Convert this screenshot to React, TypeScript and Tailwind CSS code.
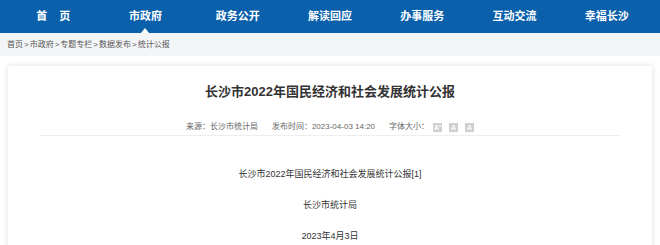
import React from 'react';

// ─── Nav Config ───────────────────────────────────────────────
const NAV_ITEMS = ['首页', '市政府', '政务公开', '解读回应', '办事服务', '互动交流', '幸福长沙'];
const ACTIVE = '市政府';
const CRUMBS = ['首页', '市政府', '专题专栏', '数据发布', '统计公报'];

const FONT = { fontFamily: '"Liberation Sans", "Noto Sans CJK SC", sans-serif' };

// ─── Top Nav ──────────────────────────────────────────────────
const TopNav = () => (
  <nav className="h-[33px] bg-[#0b60ab] px-[7px] grid grid-cols-7">
    {NAV_ITEMS.map((item) => (
      <div key={item} className="relative flex items-center justify-center text-[11px] font-bold text-white">
        {item === '首页' ? (
          <span className="flex gap-[12px]">
            <span>首</span>
            <span>页</span>
          </span>
        ) : (
          <span>{item}</span>
        )}
        {item === ACTIVE && (
          <span className="absolute bottom-0 left-1/2 -translate-x-1/2 w-0 h-0 border-l-[4px] border-r-[4px] border-b-[5px] border-l-transparent border-r-transparent border-b-white" />
        )}
      </div>
    ))}
  </nav>
);

// ─── Breadcrumb ───────────────────────────────────────────────
const Breadcrumb = () => (
  <div className="h-[23px] bg-[#f4f5f7] px-[7px] flex items-center text-[8px] text-[#555]">
    {CRUMBS.map((c, i) => (
      <span key={c}>
        {i > 0 && <span className="px-[1px]">&gt;</span>}
        {c}
      </span>
    ))}
  </div>
);

// ─── Font Size Button ─────────────────────────────────────────
const SizeBtn = ({ label }: { label: string }) => (
  <span className="w-[9px] h-[9px] shrink-0 bg-[#cfcfcf] text-white text-[7px] leading-[9px] flex items-center justify-center font-bold">
    {label}
  </span>
);

// ─── Article ──────────────────────────────────────────────────
const Article = () => (
  <div className="mx-[8px] mt-[10px] bg-white shadow-[0_0_6px_rgba(0,0,0,0.13)] pt-[18px] pb-[20px]">
    <h1 className="text-center text-[13px] leading-[16px] font-bold text-[#333]">
      长沙市2022年国民经济和社会发展统计公报
    </h1>

    <div className="mx-[32px] mt-[21px] pb-[2px] border-b border-[#eeeeee] flex items-center justify-center text-[8px] leading-[12px] text-[#666] whitespace-nowrap">
      <span className="shrink-0">来源：长沙市统计局</span>
      <span className="shrink-0 ml-[14px]">发布时间：2023-04-03 14:20</span>
      <span className="shrink-0 ml-[14px]">字体大小：</span>
      <span className="flex gap-[7px] ml-[4px]">
        <SizeBtn label="A⁺" />
        <SizeBtn label="A" />
        <SizeBtn label="A" />
      </span>
    </div>

    <div className="mt-[23px] text-center text-[9px] leading-[31px] text-[#333]">
      <p>长沙市2022年国民经济和社会发展统计公报[1]</p>
      <p>长沙市统计局</p>
      <p>2023年4月3日</p>
    </div>
  </div>
);

export default function App() {
  return (
    <div className="min-h-screen bg-white" style={FONT}>
      <TopNav />
      <Breadcrumb />
      <Article />
    </div>
  );
}
